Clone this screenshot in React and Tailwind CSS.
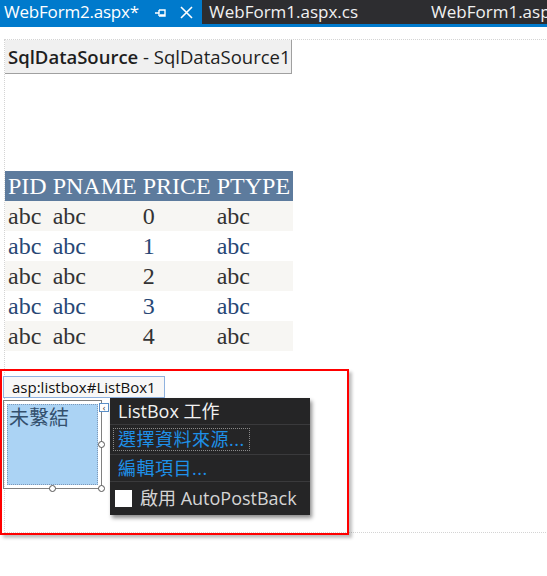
import React from "react";

const rows = [
  { price: "0", alt: true },
  { price: "1", alt: false },
  { price: "2", alt: true },
  { price: "3", alt: false },
  { price: "4", alt: true },
];

const PinIcon = () => (
  <svg width="12" height="10" viewBox="0 0 12 10" className="text-white">
    <path d="M0 5h4M4 2v6M4 2h6v6H4M5 7h5" stroke="currentColor" strokeWidth="1.4" fill="none" />
  </svg>
);

const CloseIcon = () => (
  <svg width="13" height="13" viewBox="0 0 13 13">
    <path d="M1 1l11 11M12 1L1 12" stroke="white" strokeWidth="1.6" fill="none" />
  </svg>
);

const Handle = ({ className }) => (
  <div className={`absolute w-[7px] h-[7px] rounded-full bg-white border border-[#555] ${className}`} />
);

export default function App() {
  return (
    <div className="relative w-[547px] h-[576px] overflow-hidden bg-white font-['Open_Sans','Noto_Sans_CJK_TC',sans-serif]">
      {/* Document tabs */}
      <div className="flex h-[27px] bg-[#2d2d30] border-b-[3px] border-[#007acc] whitespace-nowrap">
        <div className="flex items-center w-[202px] shrink-0 bg-[#007acc] pl-[4px] text-[17px] text-white">
          <span className="tracking-[-0.2px]">WebForm2.aspx*</span>
          <span className="ml-[16px] mt-[2px]"><PinIcon /></span>
          <span className="ml-[13px]"><CloseIcon /></span>
        </div>
        <div className="flex items-center pl-[7px] text-[17px] text-[#f1f1f1]">
          <span>WebForm1.aspx.cs</span>
          <span className="ml-[73px]">WebForm1.aspx</span>
        </div>
      </div>

      {/* Design surface */}
      <div className="ml-[4px] mt-[12px] w-[600px] h-[494px] border-t border-l border-b border-dotted border-[#d4d4d4]">
        <div className="w-[287px] h-[34px] flex items-center pl-[3px] bg-[#f0f0f0] border-r border-b border-[#a0a0a0] text-[18.5px] text-[#1e1e1e] whitespace-nowrap">
          <span className="font-semibold">SqlDataSource</span>
          <span>&nbsp;- SqlDataSource1</span>
        </div>

        <table className="mt-[97px] border-collapse font-['Liberation_Serif','Noto_Sans_CJK_TC',serif] text-[24px] leading-[30px]">
          <thead>
            <tr className="bg-[#5d7b9d] text-white h-[30px]">
              <th className="px-[3px] font-normal text-left">PID</th>
              <th className="px-[3px] font-normal text-left">PNAME</th>
              <th className="px-[3px] font-normal text-left">PRICE</th>
              <th className="px-[3px] font-normal text-left">PTYPE</th>
            </tr>
          </thead>
          <tbody>
            {rows.map((r) => (
              <tr
                key={r.price}
                className={r.alt ? "bg-[#f7f6f3] text-[#333333]" : "bg-white text-[#284775]"}
              >
                <td className="px-[3px]">abc</td>
                <td className="px-[3px]">abc</td>
                <td className="px-[3px]">{r.price}</td>
                <td className="px-[3px]">abc</td>
              </tr>
            ))}
          </tbody>
        </table>

        {/* ListBox designer */}
        <div className="relative mt-[24px]">
          <div className="-ml-[2px] inline-flex items-center h-[22px] px-[8px] bg-[#f7f7f7] border border-[#8fb2df] text-[15px] text-[#111]">
            asp:listbox#ListBox1
          </div>
          <div className="relative -ml-[2px] mt-[1px] w-[99px] h-[89px] border border-[#808080] p-[3px]">
            <div className="h-full bg-[#abd3f4] border border-dotted border-[#7d98b8] pl-[1px] font-['Noto_Sans_CJK_TC',sans-serif] text-[20px] leading-[24px] text-[#34506e]">
              未繫結
            </div>
            <Handle className="right-[-4px] top-[40px]" />
            <Handle className="left-[45px] bottom-[-4px]" />
            <Handle className="right-[-4px] bottom-[-4px]" />
            <div className="absolute right-[-8px] top-[2px] w-[10px] h-[9px] bg-white border border-[#5b8fc7] flex items-center justify-center text-[9px] leading-none text-[#333]">
              ‹
            </div>
          </div>

          {/* Smart tag panel */}
          <div className="absolute left-[105px] top-[23px] w-[200px] bg-[#252526] shadow-[2px_3px_4px_rgba(0,0,0,0.45)] text-[18px] whitespace-nowrap">
            <div className="h-[27px] flex items-center pl-[8px] text-[#f1f1f1] border-b border-[#3a3a3c]">
              ListBox 工作
            </div>
            <div className="h-[30px] flex items-center pl-[3px] border-b border-[#3a3a3c]">
              <span className="h-[23px] flex items-center px-[4px] border border-dotted border-[#8a8a8a] text-[#1e90e8] tracking-[0.5px]">
                選擇資料來源...
              </span>
            </div>
            <div className="h-[27px] flex items-center pl-[8px] text-[#1e90e8] border-b border-[#3a3a3c] tracking-[0.5px]">
              編輯項目...
            </div>
            <div className="h-[33px] flex items-center pl-[5px] text-[#d4d4d4]">
              <span className="w-[17px] h-[17px] bg-white mr-[8px]" />
              啟用 AutoPostBack
            </div>
          </div>
        </div>
      </div>

      {/* Red highlight annotation */}
      <div className="absolute left-0 top-[369px] w-[349px] h-[166px] border-2 border-[#ff0000] shadow-[3px_3px_3px_rgba(0,0,0,0.25)]" />
    </div>
  );
}
